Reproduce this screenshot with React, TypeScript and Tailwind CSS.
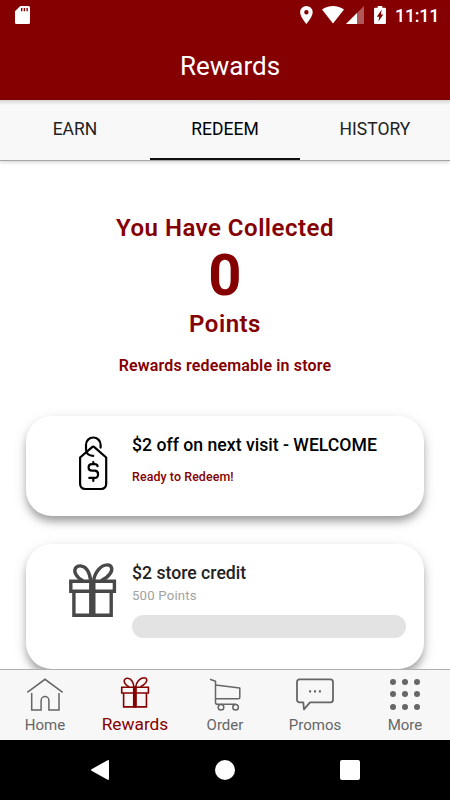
import type { ReactNode } from "react";
import clsx from "clsx";

const TABS = ["EARN", "REDEEM", "HISTORY"];
const ACTIVE_TAB = "REDEEM";

function App() {
  return (
    <div className="mx-auto flex h-[800px] w-[450px] flex-col overflow-hidden bg-white font-['Roboto',sans-serif]">
      <div className="bg-[#850000] text-white">
        <StatusBar />
        <h1 className="h-[68px] pl-[10px] text-center text-[26px] leading-[68px]">Rewards</h1>
      </div>
      <Tabs />
      <main className="min-h-0 flex-1 overflow-hidden px-[26px] pt-[52px]">
        <Summary />
        <RewardCard icon={<TagIcon />} title="$2 off on next visit - WELCOME" className="h-[100px] text-black">
          <p className="mt-[10px] text-[12.4px] leading-5 font-medium tracking-[0.1px] text-[#850000]">Ready to Redeem!</p>
        </RewardCard>
        <RewardCard icon={<GiftIcon className="mt-[18px] ml-[42px] h-[56px] w-[49px] text-[#484848]" stroke={3.4} />} title="$2 store credit" className="mt-[28px] h-[125px] text-[#222]">
          <p className="mt-[3px] text-[13.2px] leading-4 tracking-[0.2px] text-[#a2a2a2]">500 Points</p>
          <div className="mt-[11px] h-[22.5px] w-[274px] rounded-full bg-[#e3e3e3]"></div>
        </RewardCard>
      </main>
      <BottomNav />
      <SystemBar />
    </div>
  );
}

export default App;

function StatusBar() {
  return (
    <div className="flex h-8 items-start pt-[6px] pl-[15px]">
      <svg className="h-[18px] w-[15px]" viewBox="0 0 15 18">
        <path fill="currentColor" d="M5.3 0H13.5Q15 0 15 1.5V16.5Q15 18 13.5 18H1.5Q0 18 0 16.5V5.3Z" />
        <path stroke="#850000" strokeWidth="1.4" d="M6.7 2V5.3M9.4 2V5.3M12.1 2V5.3" />
      </svg>
      <svg className="ml-[270px] h-[18px] w-[13px]" viewBox="0 0 13 18">
        <path fill="currentColor" fillRule="evenodd" d="M6.4 0A6.3 6.3 0 0 0 .1 6.3C.1 11 6.4 18 6.4 18S12.7 11 12.7 6.3A6.3 6.3 0 0 0 6.4 0ZM6.4 4.1A2.2 2.2 0 1 1 6.4 8.5A2.2 2.2 0 0 1 6.4 4.1Z" />
      </svg>
      <svg className="ml-[9px] h-[18px] w-[22px]" viewBox="0 0 22 18">
        <path fill="currentColor" d="M0 3.5Q4.8 0 11 0T22 3.5L11 17.6Z" />
      </svg>
      <svg className="ml-[2px] h-[18px] w-[18px]" viewBox="0 0 18 18">
        <path fill="#b05858" d="M18 0V18H0Z" />
        <path fill="currentColor" d="M11 7V18H0Z" />
      </svg>
      <svg className="ml-[10px] h-[18px] w-[12px]" viewBox="0 0 12 18">
        <path fill="currentColor" d="M3.7 0H8.3V1.8H10.8Q12 1.8 12 3V16.8Q12 18 10.8 18H1.2Q0 18 0 16.8V3Q0 1.8 1.2 1.8H3.7Z" />
        <path fill="#850000" d="M7.6 3.8 2.8 10.8H5.2L4.4 15.6 9.3 8.6H7Z" />
      </svg>
      <span className="ml-[9px] text-[18px] leading-[19px] font-medium tracking-[-0.3px]">11:11</span>
    </div>
  );
}

function Tabs() {
  return (
    <div className="relative z-10 h-[61px] shrink-0 border-b border-[#a5a5a5] bg-[#f8f8f8] shadow-[0_1px_4px_rgba(0,0,0,0.2)]">
      <div className="grid h-[60px] grid-cols-3 bg-linear-to-b from-[#d4d4d4] to-[#f8f8f8] to-[5px]">
        {TABS.map((tab) => (
          <div
            key={tab}
            className={clsx(
              "border-b-[2.5px] text-center text-[17.5px] leading-[58px]",
              tab === ACTIVE_TAB ? "border-[#111] text-black" : "border-transparent text-[#222]"
            )}
          >
            {tab}
          </div>
        ))}
      </div>
    </div>
  );
}

function Summary() {
  return (
    <div className="mb-10 text-center font-semibold text-[#850000]">
      <p className="text-[24px] leading-[30px] tracking-[0.5px]">You Have Collected</p>
      <p className="text-[58px] leading-[64px] font-bold">0</p>
      <p className="text-[24px] leading-[34px] tracking-[0.5px]">Points</p>
      <p className="mt-[15px] text-[16px] leading-5 tracking-[0.15px]">Rewards redeemable in store</p>
    </div>
  );
}

type RewardCardProps = {
  icon: ReactNode;
  title: string;
  className: string;
  children: ReactNode;
};

function RewardCard({ icon, title, className, children }: RewardCardProps) {
  return (
    <div className={clsx("flex rounded-[26px] bg-white shadow-[0_6px_9px_-1px_rgba(0,0,0,0.34),0_4px_16px_rgba(0,0,0,0.1)]", className)}>
      <div className="w-[106px] shrink-0">{icon}</div>
      <div className="pt-[18px]">
        <h2 className="text-[17.65px] leading-[23px] font-medium whitespace-nowrap">{title}</h2>
        {children}
      </div>
    </div>
  );
}

function BottomNav() {
  return (
    <nav className="relative z-10 grid h-[71px] shrink-0 grid-cols-5 border-t border-[#b0b0b0] bg-[#f7f7f7] text-[#666]">
      <NavItem label="Home"><HomeIcon /></NavItem>
      <NavItem label="Rewards" active>
        <GiftIcon className="mt-[5.5px] h-[32.5px] w-[30px]" stroke={2.6} />
      </NavItem>
      <NavItem label="Order"><CartIcon /></NavItem>
      <NavItem label="Promos"><ChatIcon /></NavItem>
      <NavItem label="More"><DotsIcon /></NavItem>
    </nav>
  );
}

function NavItem({ label, active, children }: { label: string; active?: boolean; children: ReactNode }) {
  return (
    <div className={clsx("flex flex-col items-center", active && "text-[#850000]")}>
      <div className="h-[43px]">{children}</div>
      <span className={clsx(active ? "text-[17.3px] leading-[22px]" : "text-[15px] leading-[24px]")}>{label}</span>
    </div>
  );
}

function SystemBar() {
  return (
    <div className="flex h-[60px] shrink-0 items-center justify-between bg-black pr-[90px] pl-[91px] text-white">
      <svg className="h-5 w-[18px]" viewBox="0 0 18 20">
        <path fill="currentColor" d="M16.6.2Q18-.3 18 1.2V18.8Q18 20.3 16.6 19.8L.5 10.7Q-.3 10 .5 9.3Z" />
      </svg>
      <div className="size-5 rounded-full bg-white"></div>
      <div className="size-5 rounded-[2px] bg-white"></div>
    </div>
  );
}

/* Icons */

function TagIcon() {
  return (
    <svg className="mt-[19px] ml-[51px] h-[56px] w-[32px]" viewBox="0 0 32 56" fill="none" stroke="currentColor" strokeWidth="2.2" strokeLinecap="round" strokeLinejoin="round">
      <path d="M3.1 22.5 14.8 12.3Q16.2 11.1 17.6 12.3L29.2 22.5V48.5Q29.2 54 24 54H8.3Q3.1 54 3.1 48.5Z" />
      <path d="M23.6 12.6V9.8A7.3 7.3 0 0 0 9 9.8V14.5Q9.5 20.7 16.2 20.9" />
      <path d="M20.6 31.2C20.3 29.8 19.3 29.2 17.6 29.2H15C12.6 29.2 11.6 30.6 11.6 32.4S12.8 35.6 15 35.6H17.6C20 35.6 21.1 37.1 21.1 39.2S20 42.9 17.6 42.9H12.3M16.3 27V29.2M16.3 43V46" />
    </svg>
  );
}

function GiftIcon({ className, stroke }: { className: string; stroke: number }) {
  return (
    <svg className={className} viewBox="0 0 49 56" preserveAspectRatio="none" fill="none" stroke="currentColor" strokeWidth={stroke}>
      <path d="M22.8 19C21.5 9.5 17.5 4.2 12.3 3.9 7.3 3.7 5.6 8.2 7.8 12.2 9.2 14.8 11.5 17 15 18.8" />
      <path d="M25.6 19C26.5 10.5 32.5 3 39.3 2.9 44 2.9 45 7.5 42.2 11.5 40 14.7 37 17 33 18.8" />
      <path d="M2.8 19.3H46.4V29.3H2.8ZM5.9 29.3H43.2V53.2H5.9Z" />
      <path strokeWidth="6.4" d="M24.3 18V54.8" />
    </svg>
  );
}

function HomeIcon() {
  return (
    <svg className="mt-[7px] h-[34px] w-[38px]" viewBox="0 0 38 34" fill="none" stroke="currentColor" strokeWidth="1.5">
      <path d="M1.3 15.3 19 2.3 36.7 15.3" />
      <path d="M5.7 16V33H15.1V23.5A3.9 3.9 0 0 1 22.9 23.5V33H33V16" />
    </svg>
  );
}

function CartIcon() {
  return (
    <svg className="mt-[7px] h-[34px] w-[32px]" viewBox="0 0 32 34" fill="none" stroke="currentColor" strokeWidth="1.5" strokeLinejoin="round">
      <path d="M1 2.3 6.5 4.2V25.5Q6.5 27.3 8.5 27.3H27" />
      <path d="M6.5 8 30.8 11V20.5Q30.8 21.7 29.5 21.7H6.5" />
      <circle cx="12" cy="30.3" r="2.8" />
      <circle cx="26.6" cy="30.3" r="2.8" />
    </svg>
  );
}

function ChatIcon() {
  return (
    <svg className="mt-[7px] h-[34px] w-[38px]" viewBox="0 0 38 34" fill="none" stroke="currentColor" strokeWidth="1.8" strokeLinejoin="round">
      <path d="M7.3 25.3H3.6Q1 25.3 1 22.7V4.9Q1 2.3 3.6 2.3H34.4Q37 2.3 37 4.9V22.7Q37 25.3 34.4 25.3H14L8 32.3Z" />
      <path d="M13.1 14.3H15.1M18 14.3H20M22.9 14.3H24.9" strokeWidth="2.2" />
    </svg>
  );
}

function DotsIcon() {
  return (
    <div className="grid grid-cols-3 gap-[6.3px] pt-[9px]">
      {Array.from({ length: 9 }, (_, i) => (
        <span key={i} className="size-[6px] rounded-full bg-[#666]"></span>
      ))}
    </div>
  );
}
